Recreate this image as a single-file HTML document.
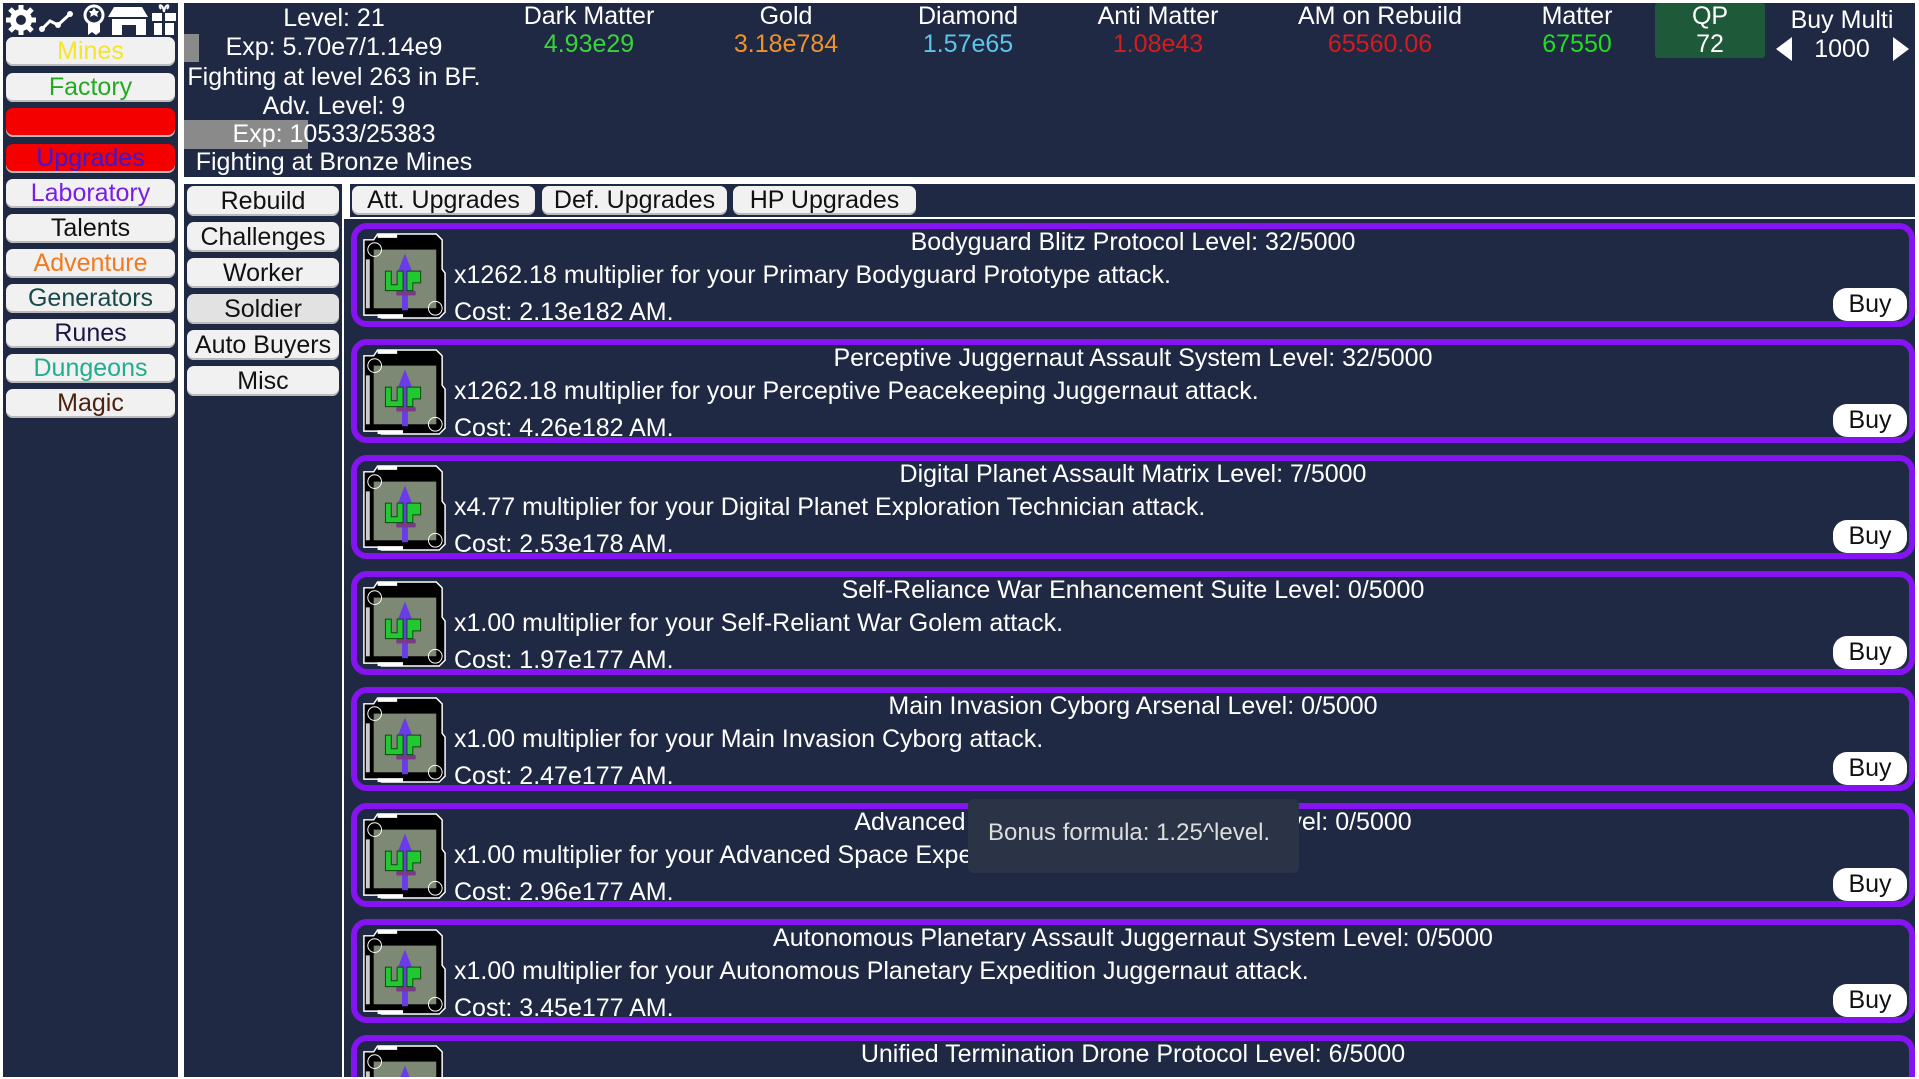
<!DOCTYPE html>
<html><head><meta charset="utf-8"><style>
*{box-sizing:border-box;margin:0;padding:0}
html,body{width:1919px;height:1079px;overflow:hidden}
body{background:#fff;position:relative;font-family:"Liberation Sans",sans-serif;color:#fff}
.p{position:absolute;background:#1f2944}
.t{position:absolute;white-space:nowrap;font-size:25px;line-height:28px}
.c{text-align:center}
.sb{position:absolute;left:6px;width:169px;height:29px;background:#f1f1f1;border-radius:7px;text-align:center;font-size:25px;line-height:29px;box-shadow:inset 0 -2px 0 #bbb}
.nb{position:absolute;left:187px;width:152px;height:30px;background:#f1f1f1;border-radius:7px;text-align:center;font-size:25px;line-height:30px;color:#111;box-shadow:inset 0 -2px 0 #bbb}
.tab{position:absolute;top:186px;height:29px;background:#f1f1f1;border-radius:7px;text-align:center;font-size:25px;line-height:29px;color:#111;box-shadow:inset 0 -2px 0 #bbb}
.card{position:absolute;left:7px;width:1564px;height:104px;border:6px solid #8614f2;border-radius:16px;background:#1f2944}
.card .ti{position:absolute;left:0;right:0;top:-1px;text-align:center;font-size:25px;line-height:28px;white-space:nowrap}
.card .l2{position:absolute;left:97px;top:32px;font-size:25px;line-height:28px;white-space:nowrap}
.card .l3{position:absolute;left:97px;top:69px;font-size:25px;line-height:28px;white-space:nowrap}
.card .buy{position:absolute;right:2px;top:59px;width:74px;height:33px;background:#fff;border-radius:14px;color:#111;font-size:25px;line-height:33px;text-align:center}
.card svg{position:absolute;left:3px;top:1px}
</style></head><body>
<div class="p" style="left:3px;top:3px;width:175px;height:1074px"></div>
<svg style="position:absolute;left:4px;top:3px" width="174" height="34" viewBox="0 0 174 34">
<g fill="#fff"><circle cx="17" cy="17" r="11"/><g stroke="#fff" stroke-width="5"><line x1="17" y1="2" x2="17" y2="32"/><line x1="2" y1="17" x2="32" y2="17"/><line x1="6" y1="6" x2="28" y2="28"/><line x1="28" y1="6" x2="6" y2="28"/></g><circle cx="17" cy="17" r="5" fill="#1f2944"/></g>
<polyline points="38,26 46,18 54,22 66,11" fill="none" stroke="#fff" stroke-width="3"/><circle cx="38" cy="26" r="3" fill="#fff"/><circle cx="54" cy="22" r="3" fill="#fff"/><circle cx="66" cy="11" r="3" fill="#fff"/>
<circle cx="90" cy="12" r="9" fill="none" stroke="#fff" stroke-width="3"/><path d="M88 8l2-3 2 3 3 0-2 3 1 3-4-2-4 2 1-3-2-3z" fill="#fff"/><path d="M84 20v12l4-3 4 3 4-3v-9" fill="#fff"/>
<path d="M110 4h28l6 10h-40z" fill="#fff"/><path d="M108 16h34v16h-10v-10h-14v10h-10z" fill="#fff"/>
<path d="M148 10h24v8h-24z M150 20h20v12h-20z" fill="#fff"/><path d="M157 6c-4-5 2-6 3 3 1-9 7-8 3-3" fill="none" stroke="#fff" stroke-width="2"/><rect x="158" y="10" width="3" height="22" fill="#1f2944"/>
</svg>
<div class="sb" style="top:37px;color:#f5e52a">Mines</div>
<div class="sb" style="top:73px;color:#22aa22">Factory</div>
<div class="sb" style="top:108px;background:#f40000;color:#f40000">Workers</div>
<div class="sb" style="top:144px;background:#f40000;color:#3a18d8">Upgrades</div>
<div class="sb" style="top:179px;color:#7a1ee0">Laboratory</div>
<div class="sb" style="top:214px;color:#111">Talents</div>
<div class="sb" style="top:249px;color:#f07a20">Adventure</div>
<div class="sb" style="top:284px;color:#174a48">Generators</div>
<div class="sb" style="top:319px;color:#1c1646">Runes</div>
<div class="sb" style="top:354px;color:#1fae8e">Dungeons</div>
<div class="sb" style="top:389px;color:#4a2410">Magic</div>

<div class="p" style="left:184px;top:3px;width:1731px;height:174px"></div>
<div style="position:absolute;left:184px;top:34px;width:15px;height:28px;background:#8a8a8a"></div>
<div style="position:absolute;left:184px;top:120px;width:124px;height:29px;background:#8a8a8a"></div>
<div class="t c" style="left:184px;width:300px;top:4px">Level: 21</div>
<div class="t c" style="left:184px;width:300px;top:33px">Exp: 5.70e7/1.14e9</div>
<div class="t c" style="left:184px;width:300px;top:63px">Fighting at level 263 in BF.</div>
<div class="t c" style="left:184px;width:300px;top:92px">Adv. Level: 9</div>
<div class="t c" style="left:184px;width:300px;top:120px">Exp: 10533/25383</div>
<div class="t c" style="left:184px;width:300px;top:148px">Fighting at Bronze Mines</div>
<div style="position:absolute;left:1655px;top:3px;width:110px;height:55px;background:#1e5a3a;border-radius:3px"></div>
<div class="t c" style="left:489px;width:200px;top:2px">Dark Matter</div><div class="t c" style="left:489px;width:200px;top:30px;color:#3ad43a">4.93e29</div>
<div class="t c" style="left:686px;width:200px;top:2px">Gold</div><div class="t c" style="left:686px;width:200px;top:30px;color:#f0922a">3.18e784</div>
<div class="t c" style="left:868px;width:200px;top:2px">Diamond</div><div class="t c" style="left:868px;width:200px;top:30px;color:#5cc6ea">1.57e65</div>
<div class="t c" style="left:1058px;width:200px;top:2px">Anti Matter</div><div class="t c" style="left:1058px;width:200px;top:30px;color:#d41c1c">1.08e43</div>
<div class="t c" style="left:1280px;width:200px;top:2px">AM on Rebuild</div><div class="t c" style="left:1280px;width:200px;top:30px;color:#d41c1c">65560.06</div>
<div class="t c" style="left:1477px;width:200px;top:2px">Matter</div><div class="t c" style="left:1477px;width:200px;top:30px;color:#22dd22">67550</div>
<div class="t c" style="left:1610px;width:200px;top:2px">QP</div><div class="t c" style="left:1610px;width:200px;top:30px">72</div>
<div class="t c" style="left:1742px;width:200px;top:6px">Buy Multi</div><div class="t c" style="left:1742px;width:200px;top:35px">1000</div>
<svg style="position:absolute;left:1775px;top:36px" width="20" height="26"><path d="M17 1L1 13 17 25z" fill="#fff"/></svg>
<svg style="position:absolute;left:1891px;top:36px" width="20" height="26"><path d="M2 1L18 13 2 25z" fill="#fff"/></svg>

<div class="p" style="left:184px;top:184px;width:158px;height:893px"></div>
<div class="nb" style="top:186px">Rebuild</div>
<div class="nb" style="top:222px">Challenges</div>
<div class="nb" style="top:258px">Worker</div>
<div class="nb" style="top:294px;background:#e2e2e2">Soldier</div>
<div class="nb" style="top:330px">Auto Buyers</div>
<div class="nb" style="top:366px">Misc</div>

<div class="p" style="left:350px;top:184px;width:1565px;height:33px"></div>
<div class="tab" style="left:352px;width:183px">Att. Upgrades</div>
<div class="tab" style="left:542px;width:185px">Def. Upgrades</div>
<div class="tab" style="left:733px;width:183px">HP Upgrades</div>

<svg width="0" height="0" style="position:absolute"><defs><g id="ic">
<path d="M4 10h10l4-6h60l6 6v30l3 4v40l-6 6H22l-4-3H4z" fill="#000" stroke="#fff" stroke-width="1.5"/>
<rect x="14" y="20" width="64" height="60" fill="#7d8875"/>
<rect x="6" y="30" width="4" height="50" fill="#fff" opacity=".8"/>
<rect x="18" y="86" width="26" height="4" fill="#fff"/><rect x="18" y="4" width="20" height="4" fill="#fff"/>
<circle cx="15" cy="20" r="7" fill="none" stroke="#fff"/><circle cx="77" cy="80" r="7" fill="none" stroke="#fff"/>
<path d="M46 24l8 20h-5v38h-6V44h-5z" fill="#6a3ce8"/>
<rect x="37" y="62" width="20" height="5" rx="2" fill="#7a3a8a"/>
<path d="M26 42h6v14h6V42h6v20H26z M48 42h14v12h-8v8h-6z" fill="#22c832" stroke="#0a4a0a" stroke-width="1"/>
</g></defs></svg>

<div style="position:absolute;left:344px;top:219px;width:1571px;height:858px;overflow:hidden;background:#1f2944">
<div class="card" style="top:4px"><svg width="88" height="92" viewBox="0 0 90 94"><use href="#ic"/></svg><div class="ti">Bodyguard Blitz Protocol Level: 32/5000</div><div class="l2">x1262.18 multiplier for your Primary Bodyguard Prototype attack.</div><div class="l3">Cost: 2.13e182 AM.</div><div class="buy">Buy</div></div>
<div class="card" style="top:120px"><svg width="88" height="92" viewBox="0 0 90 94"><use href="#ic"/></svg><div class="ti">Perceptive Juggernaut Assault System Level: 32/5000</div><div class="l2">x1262.18 multiplier for your Perceptive Peacekeeping Juggernaut attack.</div><div class="l3">Cost: 4.26e182 AM.</div><div class="buy">Buy</div></div>
<div class="card" style="top:236px"><svg width="88" height="92" viewBox="0 0 90 94"><use href="#ic"/></svg><div class="ti">Digital Planet Assault Matrix Level: 7/5000</div><div class="l2">x4.77 multiplier for your Digital Planet Exploration Technician attack.</div><div class="l3">Cost: 2.53e178 AM.</div><div class="buy">Buy</div></div>
<div class="card" style="top:352px"><svg width="88" height="92" viewBox="0 0 90 94"><use href="#ic"/></svg><div class="ti">Self-Reliance War Enhancement Suite Level: 0/5000</div><div class="l2">x1.00 multiplier for your Self-Reliant War Golem attack.</div><div class="l3">Cost: 1.97e177 AM.</div><div class="buy">Buy</div></div>
<div class="card" style="top:468px"><svg width="88" height="92" viewBox="0 0 90 94"><use href="#ic"/></svg><div class="ti">Main Invasion Cyborg Arsenal Level: 0/5000</div><div class="l2">x1.00 multiplier for your Main Invasion Cyborg attack.</div><div class="l3">Cost: 2.47e177 AM.</div><div class="buy">Buy</div></div>
<div class="card" style="top:584px"><svg width="88" height="92" viewBox="0 0 90 94"><use href="#ic"/></svg><div class="ti">Advanced Space Expedition Assault Level: 0/5000</div><div class="l2">x1.00 multiplier for your Advanced Space Expedition attack.</div><div class="l3">Cost: 2.96e177 AM.</div><div class="buy">Buy</div></div>
<div class="card" style="top:700px"><svg width="88" height="92" viewBox="0 0 90 94"><use href="#ic"/></svg><div class="ti">Autonomous Planetary Assault Juggernaut System Level: 0/5000</div><div class="l2">x1.00 multiplier for your Autonomous Planetary Expedition Juggernaut attack.</div><div class="l3">Cost: 3.45e177 AM.</div><div class="buy">Buy</div></div>
<div class="card" style="top:816px;height:42px;border-bottom:0;border-radius:16px 16px 0 0;overflow:hidden"><svg width="88" height="92" viewBox="0 0 90 94"><use href="#ic"/></svg><div class="ti">Unified Termination Drone Protocol Level: 6/5000</div></div>
</div>

<div style="position:absolute;left:968px;top:799px;width:331px;height:74px;background:#2b3346;border-radius:6px;color:#ddd;font-size:24px;line-height:68px;padding-left:20px;white-space:nowrap">Bonus formula: 1.25^level.</div>
</body></html>
